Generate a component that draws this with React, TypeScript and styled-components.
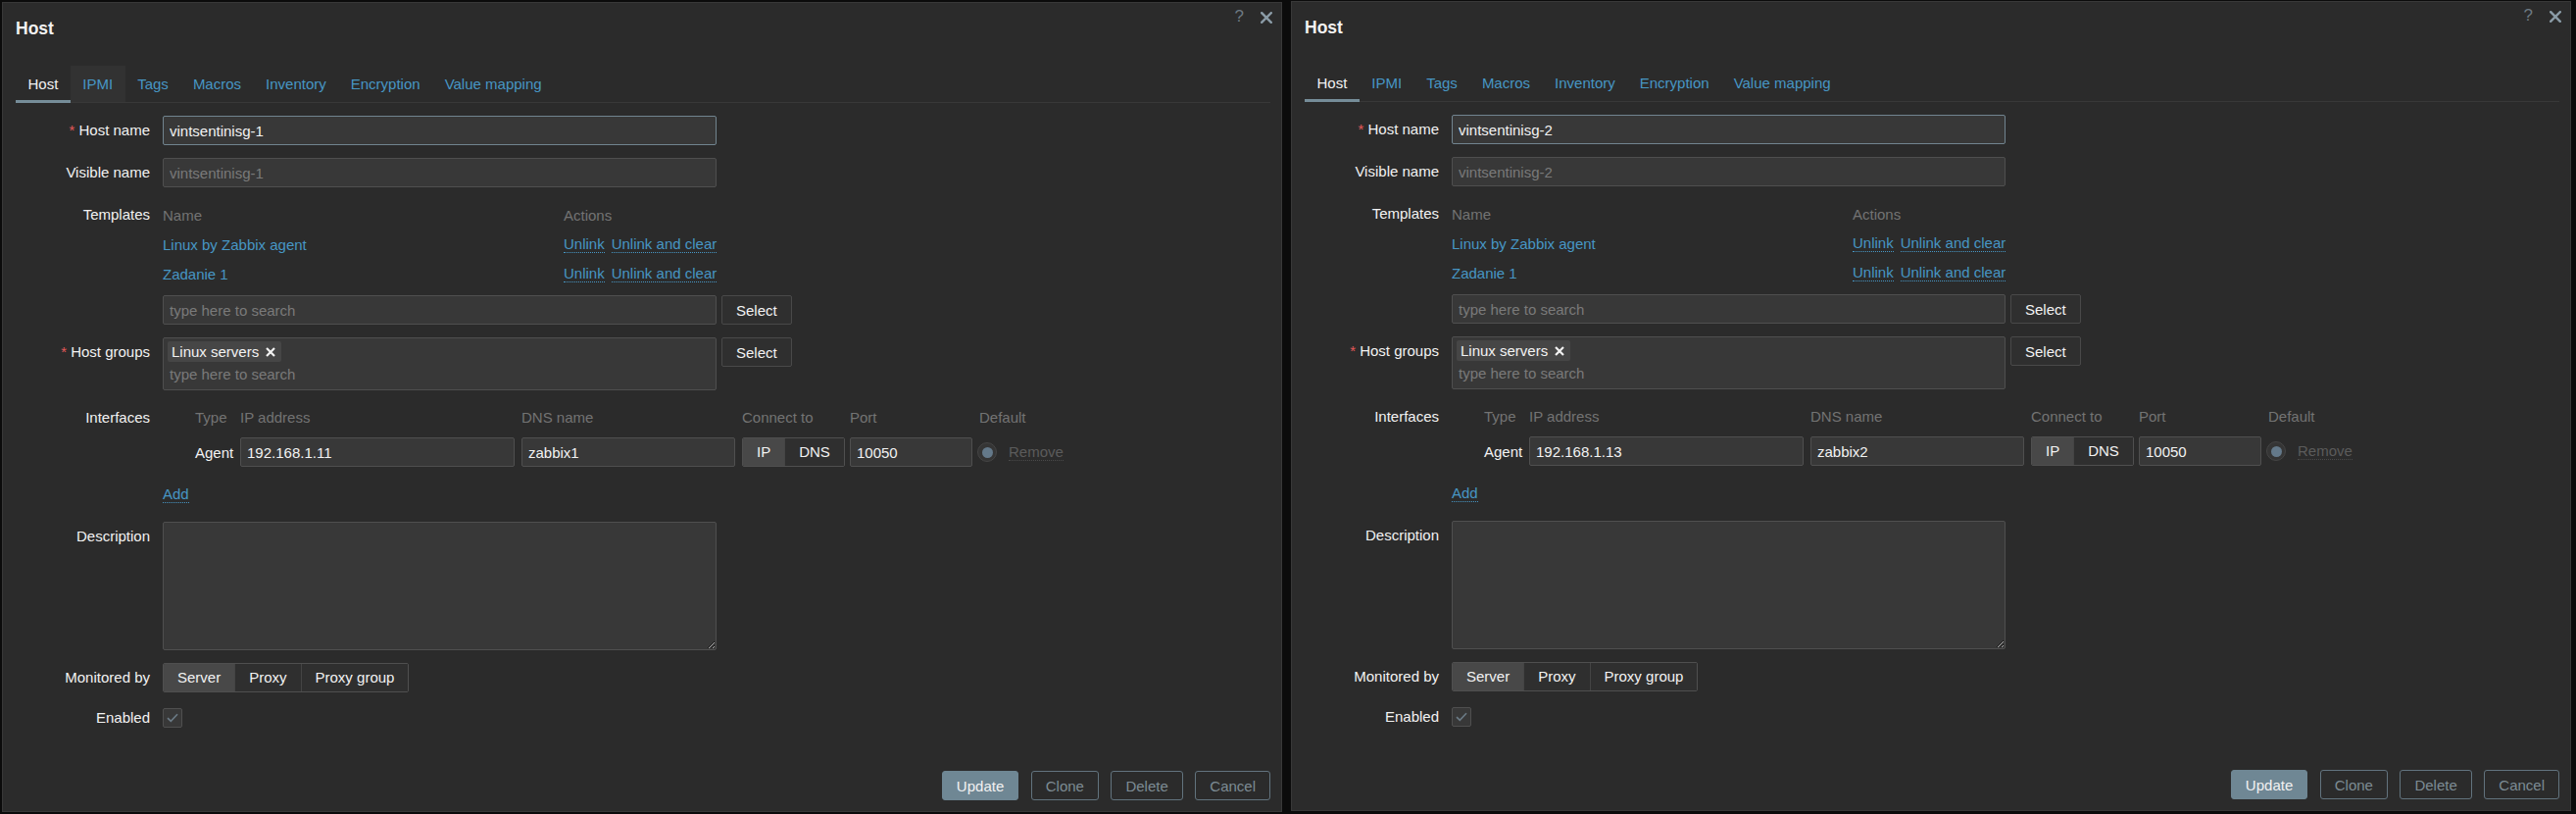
import React from "react";
import styled, { createGlobalStyle, css } from "styled-components";

const C = {
  page: "#0b0b0b",
  dialog: "#2b2b2b",
  border: "#383838",
  text: "#f2f2f2",
  muted: "#737373",
  link: "#4796c4",
  input: "#383838",
  inputBorder: "#4f4f4f",
  accent: "#768d99",
  red: "#e45959",
};

const GlobalStyle = createGlobalStyle`
  html, body { margin: 0; padding: 0; background: ${C.page}; }
  body {
    font-family: "Liberation Sans", Arial, Helvetica, sans-serif;
    font-size: 15px;
    color: ${C.text};
  }
  * { box-sizing: border-box; }
`;

const Desk = styled.div`
  display: flex;
  align-items: flex-start;
  gap: 9px;
  padding-left: 2px;
  width: 2628px;
  height: 830px;
  overflow: hidden;
  background: ${C.page};
`;

const Dialog = styled.section<{ $top: number }>`
  position: relative;
  margin-top: ${(p) => p.$top}px;
  width: 1306px;
  height: 826px;
  flex: none;
  display: flex;
  flex-direction: column;
  padding: 0 11px 11px 13px;
  background: ${C.dialog};
  border: 1px solid ${C.border};
`;

const Header = styled.header`
  padding-top: 16px;
`;

const Title = styled.h2`
  margin: 0;
  font-size: 17.5px;
  line-height: 20px;
  font-weight: bold;
  color: ${C.text};
`;

const HelpIcon = styled.span`
  position: absolute;
  top: 5px;
  right: 38px;
  font-size: 17px;
  line-height: 17px;
  color: #6d7982;
`;

const CloseIcon = styled.svg`
  position: absolute;
  top: 9px;
  right: 9px;
  width: 12px;
  height: 12px;
`;

const TabList = styled.nav`
  display: flex;
  margin-top: 28px;
  border-bottom: 1px solid ${C.border};
`;

const Tab = styled.span<{ $active?: boolean; $hover?: boolean }>`
  position: relative;
  height: 37px;
  line-height: 37px;
  padding: 0 12.5px;
  color: ${(p) => (p.$active ? C.text : C.link)};
  background: ${(p) => (p.$hover ? "#323232" : "transparent")};
  ${(p) =>
    p.$active &&
    css`
      &::after {
        content: "";
        position: absolute;
        left: 0;
        right: 0;
        bottom: -1px;
        height: 3px;
        background: ${C.accent};
      }
    `}
`;

const Form = styled.div`
  display: grid;
  grid-template-columns: 137px 1fr;
  column-gap: 13px;
  row-gap: 13px;
  padding-top: 13px;
`;

const Label = styled.div<{ $lh?: number }>`
  text-align: right;
  white-space: nowrap;
  line-height: ${(p) => p.$lh ?? 30}px;
  color: ${C.text};
`;

const Required = styled.span`
  color: ${C.red};
  margin-right: 4px;
`;

const FieldRow = styled.div`
  display: flex;
  align-items: flex-start;
  gap: 5px;
`;

const FieldColumn = styled.div`
  display: flex;
  flex-direction: column;
`;

const TextInput = styled.input<{ $width?: number; $focused?: boolean }>`
  width: ${(p) => p.$width ?? 565}px;
  height: 30px;
  padding: 0 6px;
  margin: 0;
  font: inherit;
  font-size: 15px;
  color: ${C.text};
  background: ${C.input};
  border: 1px solid ${(p) => (p.$focused ? "#71848f" : C.inputBorder)};
  border-radius: 2px;
  outline: none;
  &::placeholder { color: #7a7a7a; opacity: 1; }
`;

const GreyButton = styled.button`
  height: 30px;
  padding: 0 14px;
  font: inherit;
  font-size: 15px;
  color: ${C.text};
  background: #2f2f2f;
  border: 1px solid #494949;
  border-radius: 2px;
`;

const TemplateTable = styled.div`
  display: grid;
  grid-template-columns: 409px 156px;
  grid-auto-rows: 30px;
  align-items: center;
  width: 565px;
`;

const HeadCell = styled.span`
  color: ${C.muted};
  white-space: nowrap;
`;

const Link = styled.a`
  color: ${C.link};
  text-decoration: none;
  white-space: nowrap;
`;

const DottedLink = styled.a<{ $disabled?: boolean }>`
  color: ${(p) => (p.$disabled ? "#5b5b5b" : C.link)};
  text-decoration: none;
  border-bottom: 1px dotted ${(p) => (p.$disabled ? "#4a4a4a" : C.link)};
  white-space: nowrap;
`;

const ActionLinks = styled.div`
  display: flex;
  gap: 7px;
`;

const SearchWrap = styled.div`
  margin-top: 7px;
`;

const MultiSelect = styled.div`
  width: 565px;
  height: 54px;
  padding: 3px 4px;
  background: ${C.input};
  border: 1px solid ${C.inputBorder};
  border-radius: 2px;
  display: flex;
  flex-direction: column;
  align-items: flex-start;
`;

const Chip = styled.span`
  display: inline-flex;
  align-items: center;
  gap: 7px;
  height: 22px;
  padding: 0 6px 0 4px;
  background: #464646;
  border-radius: 2px;
  color: ${C.text};
`;

const MultiSearch = styled.span`
  line-height: 24px;
  margin-top: 1px;
  padding-left: 2px;
  color: #7a7a7a;
`;

const InterfaceGrid = styled.div`
  display: grid;
  grid-template-columns: 26px 39px 280px 218px 103px 125px auto;
  grid-auto-rows: 30px;
  column-gap: 7px;
  row-gap: 6px;
  align-items: center;
  margin-top: -1px;
`;

const TypeCell = styled.span`
  text-align: right;
  white-space: nowrap;
`;

const Segmented = styled.div`
  display: inline-flex;
  height: 30px;
  border: 1px solid ${C.inputBorder};
  border-radius: 2px;
  overflow: hidden;
  justify-self: start;
`;

const Segment = styled.span<{ $selected?: boolean }>`
  padding: 0 14px;
  line-height: 28px;
  white-space: nowrap;
  color: ${C.text};
  background: ${(p) => (p.$selected ? "#484848" : "#2f2f2f")};
  & + & { border-left: 1px solid #444444; }
`;

const DefaultCell = styled.div`
  display: flex;
  align-items: center;
  gap: 12px;
  margin-left: -2px;
`;

const Radio = styled.span`
  width: 20px;
  height: 20px;
  border-radius: 50%;
  border: 1px solid #454545;
  background: #353535;
  display: flex;
  align-items: center;
  justify-content: center;
  &::after {
    content: "";
    width: 11px;
    height: 11px;
    border-radius: 50%;
    background: #64798a;
  }
`;

const AddRow = styled.div`
  margin-top: 13px;
  line-height: 30px;
`;

const Description = styled.textarea`
  display: block;
  width: 565px;
  height: 131px;
  margin: 0;
  padding: 4px 6px;
  font: inherit;
  color: ${C.text};
  background: ${C.input};
  border: 1px solid ${C.inputBorder};
  border-radius: 2px;
  outline: none;
  resize: both;
  color-scheme: dark;
`;

const CheckRow = styled.div`
  height: 26px;
  display: flex;
  align-items: center;
`;

const Checkbox = styled.span`
  width: 20px;
  height: 20px;
  display: flex;
  align-items: center;
  justify-content: center;
  background: ${C.input};
  border: 1px solid ${C.inputBorder};
  border-radius: 2px;
`;

const Footer = styled.footer`
  margin-top: auto;
  display: flex;
  justify-content: flex-end;
  gap: 12.5px;
`;

const PrimaryButton = styled.button`
  height: 30px;
  padding: 0 14px;
  font: inherit;
  font-size: 15px;
  color: ${C.text};
  background: #6f8794;
  border: 1px solid #6f8794;
  border-radius: 3px;
`;

const AltButton = styled.button`
  height: 30px;
  padding: 0 14px;
  font: inherit;
  font-size: 15px;
  color: #7d8b94;
  background: transparent;
  border: 1px solid #62737e;
  border-radius: 3px;
`;

const TABS = ["Host", "IPMI", "Tags", "Macros", "Inventory", "Encryption", "Value mapping"];

const TEMPLATES = ["Linux by Zabbix agent", "Zadanie 1"];

type HostData = { name: string; ip: string; dns: string; top: number; hoverTab?: number };

const HOSTS: HostData[] = [
  { name: "vintsentinisg-1", ip: "192.168.1.11", dns: "zabbix1", top: 2, hoverTab: 1 },
  { name: "vintsentinisg-2", ip: "192.168.1.13", dns: "zabbix2", top: 1 },
];

const CloseGlyph = () => (
  <CloseIcon viewBox="0 0 12 12" aria-label="Close">
    <path d="M1.2 1.2 L10.8 10.8 M10.8 1.2 L1.2 10.8" stroke="#8a9ba6" strokeWidth="2.4" strokeLinecap="square" />
  </CloseIcon>
);

const ChipX = () => (
  <svg width="10" height="10" viewBox="0 0 10 10">
    <path d="M1 1 L9 9 M9 1 L1 9" stroke="#f2f2f2" strokeWidth="2.2" />
  </svg>
);

const Check = () => (
  <svg width="12" height="10" viewBox="0 0 12 10">
    <path d="M1 5.2 L4.3 8.3 L11 1.3" fill="none" stroke="#6b7b86" strokeWidth="1.6" />
  </svg>
);

const HostDialog: React.FC<{ host: HostData }> = ({ host }) => (
  <Dialog $top={host.top}>
    <Header>
      <Title>Host</Title>
    </Header>
    <HelpIcon>?</HelpIcon>
    <CloseGlyph />
    <TabList>
      {TABS.map((t, i) => (
        <Tab key={t} $active={i === 0} $hover={i === host.hoverTab}>
          {t}
        </Tab>
      ))}
    </TabList>
    <Form>
      <Label>
        <Required>*</Required>Host name
      </Label>
      <TextInput $focused value={host.name} readOnly />

      <Label>Visible name</Label>
      <TextInput placeholder={host.name} readOnly />

      <Label>Templates</Label>
      <FieldColumn>
        <TemplateTable>
          <HeadCell>Name</HeadCell>
          <HeadCell>Actions</HeadCell>
          {TEMPLATES.map((tpl) => (
            <React.Fragment key={tpl}>
              <span>
                <Link>{tpl}</Link>
              </span>
              <ActionLinks>
                <DottedLink>Unlink</DottedLink>
                <DottedLink>Unlink and clear</DottedLink>
              </ActionLinks>
            </React.Fragment>
          ))}
        </TemplateTable>
        <SearchWrap>
          <FieldRow>
            <TextInput placeholder="type here to search" readOnly />
            <GreyButton>Select</GreyButton>
          </FieldRow>
        </SearchWrap>
      </FieldColumn>

      <Label>
        <Required>*</Required>Host groups
      </Label>
      <FieldRow>
        <MultiSelect>
          <Chip>
            Linux servers
            <ChipX />
          </Chip>
          <MultiSearch>type here to search</MultiSearch>
        </MultiSelect>
        <GreyButton>Select</GreyButton>
      </FieldRow>

      <Label>Interfaces</Label>
      <FieldColumn>
        <InterfaceGrid>
          <span />
          <HeadCell>Type</HeadCell>
          <HeadCell>IP address</HeadCell>
          <HeadCell>DNS name</HeadCell>
          <HeadCell>Connect to</HeadCell>
          <HeadCell>Port</HeadCell>
          <HeadCell>Default</HeadCell>

          <span />
          <TypeCell>Agent</TypeCell>
          <TextInput $width={280} value={host.ip} readOnly />
          <TextInput $width={218} value={host.dns} readOnly />
          <Segmented>
            <Segment $selected>IP</Segment>
            <Segment>DNS</Segment>
          </Segmented>
          <TextInput $width={125} value="10050" readOnly />
          <DefaultCell>
            <Radio />
            <DottedLink $disabled>Remove</DottedLink>
          </DefaultCell>
        </InterfaceGrid>
        <AddRow>
          <DottedLink>Add</DottedLink>
        </AddRow>
      </FieldColumn>

      <Label>Description</Label>
      <div>
        <Description readOnly />
      </div>

      <Label>Monitored by</Label>
      <div>
        <Segmented>
          <Segment $selected>Server</Segment>
          <Segment>Proxy</Segment>
          <Segment>Proxy group</Segment>
        </Segmented>
      </div>

      <Label $lh={26}>Enabled</Label>
      <CheckRow>
        <Checkbox>
          <Check />
        </Checkbox>
      </CheckRow>
    </Form>
    <Footer>
      <PrimaryButton>Update</PrimaryButton>
      <AltButton>Clone</AltButton>
      <AltButton>Delete</AltButton>
      <AltButton>Cancel</AltButton>
    </Footer>
  </Dialog>
);

export default function App() {
  return (
    <>
      <GlobalStyle />
      <Desk>
        {HOSTS.map((h) => (
          <HostDialog key={h.name} host={h} />
        ))}
      </Desk>
    </>
  );
}
